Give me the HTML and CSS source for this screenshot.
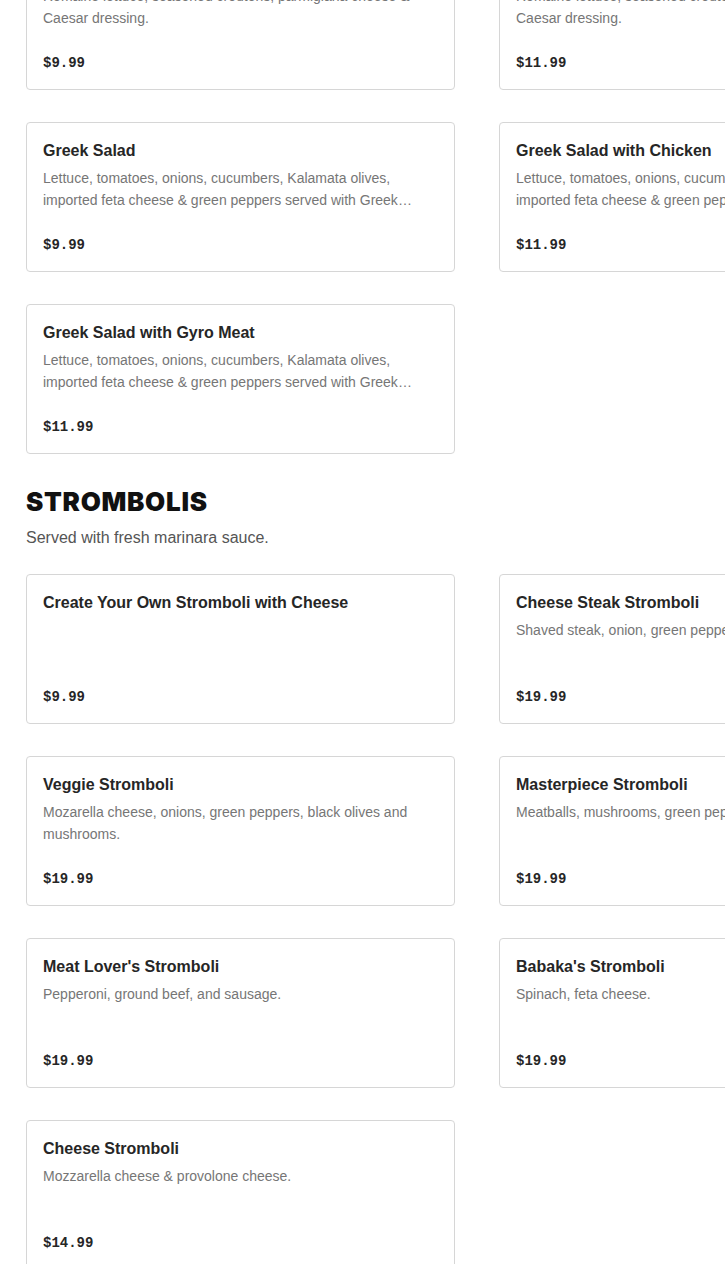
FILE: index.html
```html
<!DOCTYPE html>
<html lang="en">
<head>
<meta charset="utf-8">
<title>Menu</title>
<link rel="stylesheet" href="styles.css">
</head>
<body>
<main class="menu">
  <section class="section section-first">
    <div class="grid">
      <article class="card">
        <h3 class="card-title">Caesar Salad</h3>
        <p class="card-desc">Romaine lettuce, seasoned croutons, parmigiana cheese &amp; Caesar dressing.</p>
        <p class="card-price">$9.99</p>
      </article>
      <article class="card">
        <h3 class="card-title">Caesar Salad with Chicken</h3>
        <p class="card-desc">Romaine lettuce, seasoned croutons, parmigiana cheese &amp; Caesar dressing.</p>
        <p class="card-price">$11.99</p>
      </article>
      <article class="card">
        <h3 class="card-title">Greek Salad</h3>
        <p class="card-desc">Lettuce, tomatoes, onions, cucumbers, Kalamata olives, imported feta cheese &amp; green peppers served with Greek dressing.</p>
        <p class="card-price">$9.99</p>
      </article>
      <article class="card">
        <h3 class="card-title">Greek Salad with Chicken</h3>
        <p class="card-desc">Lettuce, tomatoes, onions, cucumbers, Kalamata olives, imported feta cheese &amp; green peppers served with Greek dressing.</p>
        <p class="card-price">$11.99</p>
      </article>
      <article class="card">
        <h3 class="card-title">Greek Salad with Gyro Meat</h3>
        <p class="card-desc">Lettuce, tomatoes, onions, cucumbers, Kalamata olives, imported feta cheese &amp; green peppers served with Greek dressing.</p>
        <p class="card-price">$11.99</p>
      </article>
    </div>
  </section>

  <section class="section">
    <h2 class="section-title">STROMBOLIS</h2>
    <p class="section-sub">Served with fresh marinara sauce.</p>
    <div class="grid">
      <article class="card">
        <h3 class="card-title">Create Your Own Stromboli with Cheese</h3>
        <p class="card-desc"></p>
        <p class="card-price">$9.99</p>
      </article>
      <article class="card">
        <h3 class="card-title">Cheese Steak Stromboli</h3>
        <p class="card-desc">Shaved steak, onion, green peppers &amp; mozzarella cheese.</p>
        <p class="card-price">$19.99</p>
      </article>
      <article class="card">
        <h3 class="card-title">Veggie Stromboli</h3>
        <p class="card-desc">Mozarella cheese, onions, green peppers, black olives and mushrooms.</p>
        <p class="card-price">$19.99</p>
      </article>
      <article class="card">
        <h3 class="card-title">Masterpiece Stromboli</h3>
        <p class="card-desc">Meatballs, mushrooms, green peppers, onions &amp; mozzarella.</p>
        <p class="card-price">$19.99</p>
      </article>
      <article class="card">
        <h3 class="card-title">Meat Lover's Stromboli</h3>
        <p class="card-desc">Pepperoni, ground beef, and sausage.</p>
        <p class="card-price">$19.99</p>
      </article>
      <article class="card">
        <h3 class="card-title">Babaka's Stromboli</h3>
        <p class="card-desc">Spinach, feta cheese.</p>
        <p class="card-price">$19.99</p>
      </article>
      <article class="card">
        <h3 class="card-title">Cheese Stromboli</h3>
        <p class="card-desc">Mozzarella cheese &amp; provolone cheese.</p>
        <p class="card-price">$14.99</p>
      </article>
    </div>
  </section>
</main>
</body>
</html>
```

FILE: styles.css
```css
html, body {
  margin: 0;
  padding: 0;
  background: #ffffff;
  overflow: hidden;
}

body {
  font-family: "Liberation Sans", Arial, sans-serif;
  color: #222222;
}

.menu {
  padding: 0 0 0 26px;
  width: 904px;
}

.section-first {
  margin-top: -60px;
}

.section + .section {
  margin-top: 32px;
}

.section-title {
  margin: 0;
  font-family: Inter, "Liberation Sans", sans-serif;
  font-weight: 900;
  font-size: 26px;
  line-height: 32px;
  letter-spacing: 0.7px;
  color: #111111;
}

.section-sub {
  margin: 8px 0 24px;
  font-size: 16px;
  line-height: 24px;
  color: #555555;
}

.grid {
  display: grid;
  grid-template-columns: 429px 429px;
  column-gap: 44px;
  row-gap: 32px;
}

.card {
  box-sizing: border-box;
  height: 150px;
  border: 1px solid #d6d6d6;
  border-radius: 4px;
  padding: 16px;
  display: flex;
  flex-direction: column;
}

.card-title {
  margin: 0;
  font-size: 16px;
  line-height: 24px;
  font-weight: 700;
  color: #262626;
  white-space: nowrap;
}

.card-desc {
  margin: 4px 0 0;
  font-size: 14px;
  line-height: 22px;
  color: #767676;
  height: 44px;
  overflow: hidden;
  display: -webkit-box;
  -webkit-line-clamp: 2;
  -webkit-box-orient: vertical;
}

.card-price {
  margin: auto 0 0;
  font-family: "Liberation Mono", "DejaVu Sans Mono", monospace;
  font-weight: 700;
  font-size: 14px;
  line-height: 20px;
  color: #262626;
}
```
